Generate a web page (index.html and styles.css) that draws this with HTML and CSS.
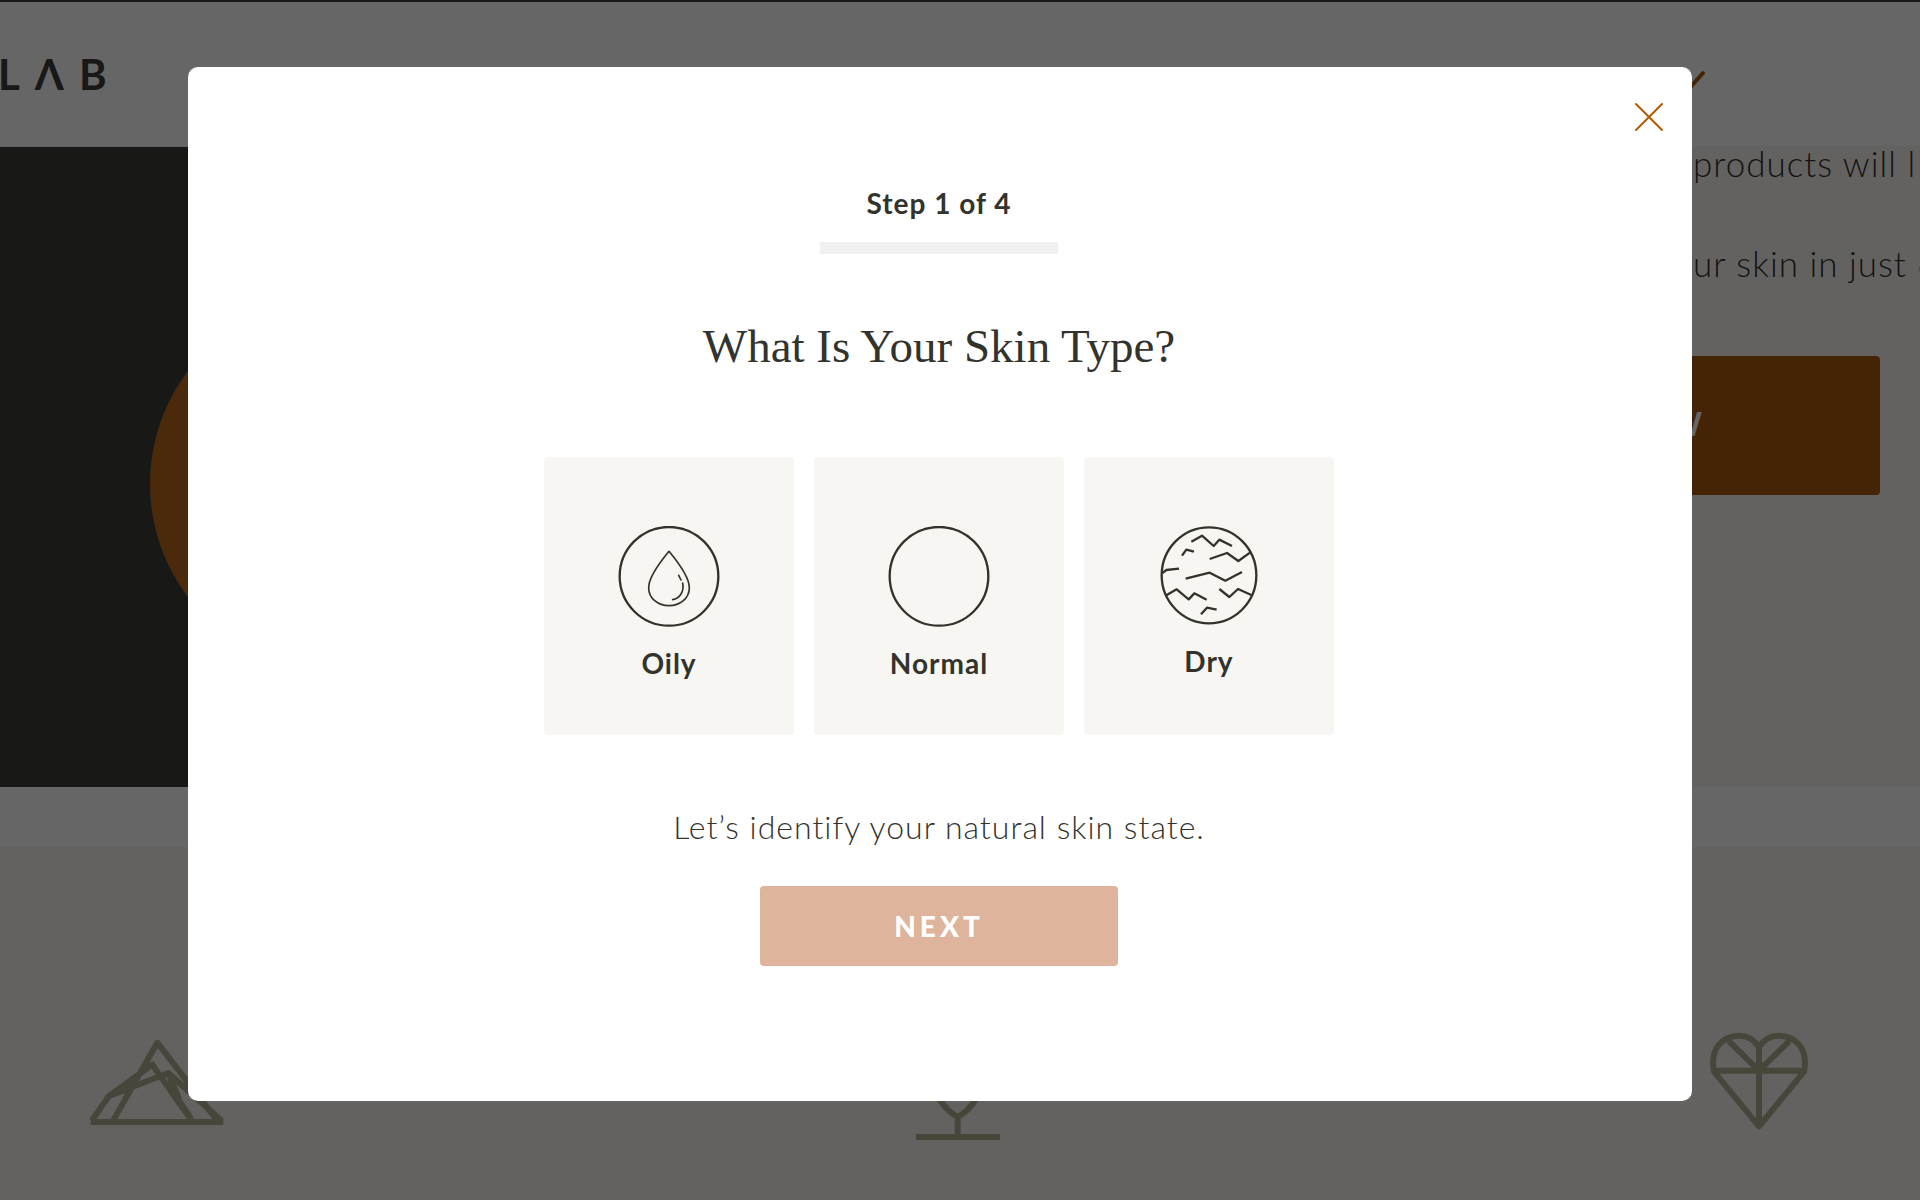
FILE: index.html
```html
<!DOCTYPE html>
<html lang="en">
<head>
<meta charset="utf-8">
<meta name="viewport" content="width=device-width, initial-scale=1">
<title>Skin Quiz</title>
<link rel="stylesheet" href="styles.css">
</head>
<body>
<div class="page">
  <header class="site-header">
    <a class="logo" href="#">LΛB</a>
    <svg class="chevron" viewBox="0 0 40 48" aria-hidden="true"><path d="M3 23l17 19 17-19"/></svg>
  </header>
  <main>
    <section class="hero">
      <div class="hero-media"><div class="hero-disc"></div></div>
      <div class="hero-copy">
        <p class="hero-text">products will l</p>
        <p class="hero-text">ur skin in just 6</p>
        <button class="hero-button" type="button">NOW</button>
      </div>
    </section>
    <section class="features">
      <svg class="feature-icon" width="136" height="104" viewBox="0 0 408 312" aria-hidden="true">
        <path d="M5 291h398M8 287l52-74L190 119l118 168M60 213l178-69 160 143M72 287L205 53l180 234M238 144l32 78M60 213l70-26M238 144l28 76 40 60"/>
      </svg>
      <svg class="feature-icon" width="84" height="120" viewBox="0 0 252 360" aria-hidden="true">
        <path d="M0 336h252M125 336v-60M125 276C100 262 84 244 73 226 40 160 70 100 125 60c55 40 85 100 52 166-11 18-27 36-52 50z"/>
      </svg>
      <svg class="feature-icon" width="98" height="107" viewBox="0 0 294 321" aria-hidden="true">
        <path d="M147 304L12 140C-2 68 40 32 88 32c28 0 46 14 59 34 13-20 31-34 59-34 48 0 90 36 76 108zM147 66v238M12 137h270M56 48l91 89 91-89"/>
      </svg>
    </section>
  </main>
</div>

<div class="overlay">
  <form class="modal" role="dialog" aria-modal="true" aria-labelledby="question">
    <button class="close" type="button" aria-label="Close">
      <svg width="30" height="30" viewBox="0 0 30 30" aria-hidden="true"><path d="M2 2l26 26M28 2L2 28"/></svg>
    </button>
    <label class="step" for="progress">Step 1 of 4</label>
    <progress class="progress" id="progress" value="0" max="4"></progress>
    <h1 class="question" id="question">What Is Your Skin Type?</h1>
    <div class="cards" role="radiogroup" aria-labelledby="question">
      <label class="card">
        <input class="card-input" type="radio" name="skin" value="oily">
        <svg class="card-icon" width="102" height="101" viewBox="0 0 306 303" aria-hidden="true">
          <circle cx="153" cy="151" r="148"/>
          <path class="thin" d="M153 76c-24 29-61 75-61 109 0 32 28 54 61 54s61-22 61-54c0-34-37-80-61-109z"/>
          <path class="thin" d="M182 148l7 14M194 171c5 25-8 46-30 50" stroke-linecap="round"/>
        </svg>
        <span class="card-label">Oily</span>
      </label>
      <label class="card">
        <input class="card-input" type="radio" name="skin" value="normal">
        <svg class="card-icon" width="102" height="101" viewBox="0 0 306 303" aria-hidden="true">
          <circle cx="153" cy="151" r="148"/>
        </svg>
        <span class="card-label">Normal</span>
      </label>
      <label class="card">
        <input class="card-input" type="radio" name="skin" value="dry">
        <svg class="card-icon" width="98" height="99" viewBox="0 0 294 297" aria-hidden="true">
          <ellipse cx="147" cy="148" rx="142" ry="144"/>
          <path d="M94 47l32-18 35 31 17-19 38 19M66 89l13-18 23 6M149 99l52-18 34 24 35-25M6 142l13-10 38-4M77 158l72-18 47 24 50-26M19 208l31-18 36 30 17-18 37 19M178 189l30 24 26-24 40 18M123 265l18-20 29 6"/>
        </svg>
        <span class="card-label">Dry</span>
      </label>
    </div>
    <p class="hint">Let’s identify your natural skin state.</p>
    <button class="next" type="submit">NEXT</button>
  </form>
</div>
</body>
</html>
```
FILE: styles.css
```css
* { box-sizing: border-box; }

body {
  margin: 0;
  font-family: Lato, "Liberation Sans", sans-serif;
  color: #33332e;
  background: #f9f6f2;
}

.page {
  min-height: 100vh;
  overflow: hidden;
}

/* Header */
.site-header {
  display: flex;
  align-items: center;
  justify-content: space-between;
  height: 147px;
  padding-right: 214px;
  background: #fff;
  border-top: 2px solid #3e3e39;
  border-bottom: 1px solid #f2f2f2;
}

.logo {
  margin-left: -2px;
  font-size: 42px;
  font-weight: 700;
  line-height: 48px;
  letter-spacing: 15px;
  color: #3e3e39;
  text-decoration: none;
}

.chevron {
  width: 40px;
  height: 48px;
  fill: none;
  stroke: #aa5712;
  stroke-width: 4;
  stroke-linecap: round;
}

/* Hero */
main { background: #fff; }

.hero {
  display: grid;
  grid-template-columns: 1fr 1fr;
}

.hero-media {
  padding: 150px 150px 116px;
  background: #3e3e39;
}

.hero-disc {
  width: 374px;
  height: 374px;
  border-radius: 50%;
  background: #b96919;
}

.hero-copy {
  display: flex;
  flex-direction: column;
  align-items: flex-end;
  padding-right: 40px;
  background: #f9f6f2;
}

.hero-text {
  width: 187px;
  margin: 0 0 68px;
  font-size: 35px;
  font-weight: 300;
  line-height: 32px;
  letter-spacing: 1px;
  white-space: nowrap;
}

.hero-button {
  width: 440px;
  height: 139px;
  margin-top: 9px;
  padding: 0 0 4px;
  border: 0;
  border-radius: 4px;
  background: #aa5712;
  color: #fff;
  font: 700 32px/40px Lato, "Liberation Sans", sans-serif;
}

/* Features */
.features {
  display: grid;
  grid-template-columns: 1fr 1fr 1fr;
  justify-items: center;
  margin: 60px -239px 0 -244px;
  padding: 178px 0 60px;
  background: #f9f6f2;
}

.feature-icon {
  fill: none;
  stroke: #b4af91;
  stroke-width: 18;
  stroke-linejoin: round;
}

/* Modal */
.overlay {
  position: fixed;
  inset: 0;
  display: flex;
  align-items: flex-start;
  padding: 67px 228px 0 188px;
  background: rgba(0, 0, 0, 0.6);
}

.modal {
  position: relative;
  flex: 1;
  display: flex;
  flex-direction: column;
  align-items: center;
  padding: 116px 42px 135px 40px;
  border-radius: 10px;
  background: #fff;
}

.close {
  position: absolute;
  top: 35px;
  right: 28px;
  width: 30px;
  height: 30px;
  padding: 0;
  border: 0;
  background: none;
}

.close svg {
  display: block;
  fill: none;
  stroke: #b35a00;
  stroke-width: 2;
  stroke-linecap: round;
}

.step {
  font-size: 28px;
  font-weight: 700;
  line-height: 40px;
  letter-spacing: 1px;
}

.progress {
  width: 238px;
  height: 12px;
  margin-top: 19px;
  border: 0;
  appearance: none;
  background: #f0f0f0;
}

.progress::-webkit-progress-bar { background: #f0f0f0; }
.progress::-webkit-progress-value { background: #b35a00; }

.question {
  margin: 64px 0 0;
  font-family: "Liberation Serif", serif;
  font-size: 47px;
  font-weight: 400;
  line-height: 56px;
}

.cards {
  display: grid;
  grid-template-columns: repeat(3, 250px);
  gap: 20px;
  margin-top: 83px;
}

.card {
  display: flex;
  flex-direction: column;
  align-items: center;
  height: 278px;
  padding-top: 69px;
  border-radius: 4px;
  background: #f7f6f2;
}

.card-input {
  position: absolute;
  width: 1px;
  height: 1px;
  margin: 0;
  appearance: none;
}

.card-icon {
  fill: none;
  stroke: #33332e;
  stroke-width: 7;
  stroke-linejoin: round;
}

.card-icon .thin { stroke-width: 5; }

.card-label {
  margin-top: 16px;
  font-size: 28px;
  font-weight: 700;
  line-height: 40px;
  letter-spacing: 1px;
}

.hint {
  margin: 68px 0 0;
  font-size: 32px;
  font-weight: 300;
  line-height: 48px;
  letter-spacing: 1px;
}

.next {
  width: 358px;
  height: 80px;
  margin-top: 35px;
  border: 0;
  border-radius: 4px;
  background: #deb49c;
  color: #fff;
  font: 900 28px/40px Lato, "Liberation Sans", sans-serif;
  letter-spacing: 4px;
}
```
